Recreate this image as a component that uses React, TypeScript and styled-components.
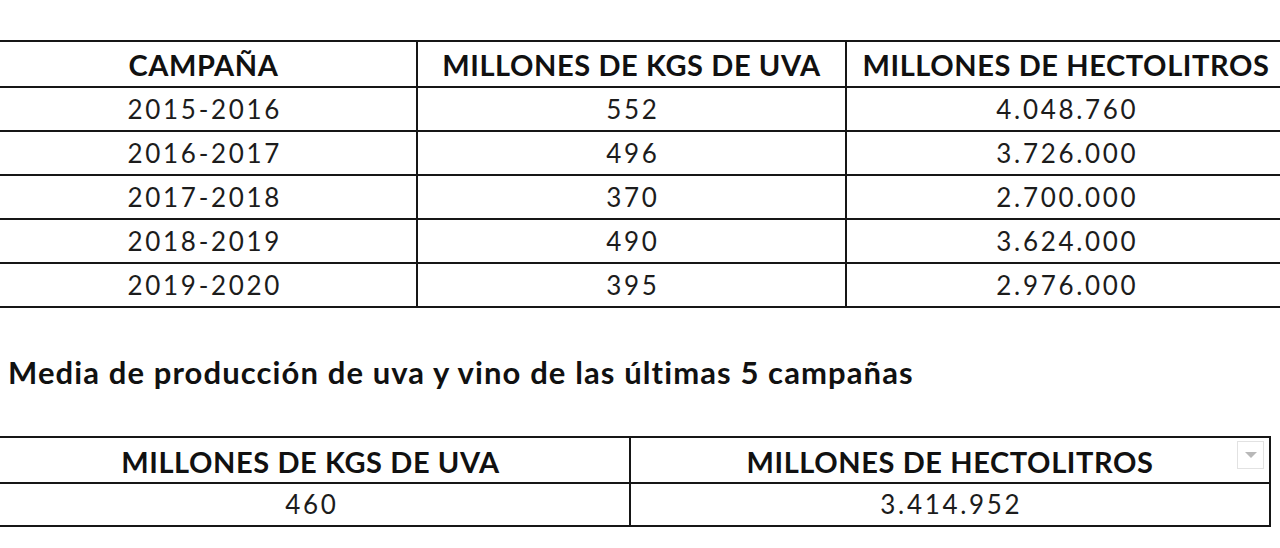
import React from "react";
import styled, { createGlobalStyle } from "styled-components";

const GlobalStyle = createGlobalStyle`
  html, body { margin: 0; padding: 0; background: #ffffff; }
  body { font-family: Lato, "Open Sans", sans-serif; color: #151515; }
`;

const Page = styled.div`
  width: 1280px;
  height: 548px;
  overflow: hidden;
  padding-top: 40px;
  box-sizing: border-box;
  display: flex;
  flex-direction: column;
`;

const Table = styled.table<{ $offset: number; $width: number }>`
  border-collapse: collapse;
  margin-left: ${(p) => p.$offset}px;
  width: ${(p) => p.$width}px;
  table-layout: fixed;
  flex: none;
`;

const HeadCell = styled.th<{ $h?: number }>`
  border: 2px solid #161616;
  height: ${(p) => p.$h ?? 40.5}px;
  padding: 3px 0 0;
  font-weight: 700;
  font-size: 29px;
  line-height: 36px;
  letter-spacing: 0.6px;
  text-align: center;
  vertical-align: middle;
  position: relative;
  color: #111;
`;

const Cell = styled.td<{ $h?: number }>`
  border: 2px solid #161616;
  height: ${(p) => p.$h ?? 42.2}px;
  padding: 0;
  font-size: 26px;
  line-height: 32px;
  letter-spacing: 2.7px;
  text-indent: 2.7px;
  text-align: center;
  vertical-align: middle;
  color: #1c1c1c;
`;

const Title = styled.h2`
  margin: 47px 0 0 8px;
  font-size: 31px;
  letter-spacing: 1.1px;
  font-weight: 700;
  color: #111;
  line-height: 34px;
  flex: none;
`;

const Gap = styled.div`
  height: 47px;
  flex: none;
`;

const FilterButton = styled.span`
  position: absolute;
  right: 5px;
  top: 3px;
  width: 27px;
  height: 28px;
  border: 1px solid #e2e2e2;
  box-sizing: border-box;
  display: flex;
  align-items: center;
  justify-content: center;
`;

const Arrow = styled.span`
  width: 0;
  height: 0;
  border-left: 6px solid transparent;
  border-right: 6px solid transparent;
  border-top: 6px solid #b8b8b8;
`;

const rows = [
  ["2015-2016", "552", "4.048.760"],
  ["2016-2017", "496", "3.726.000"],
  ["2017-2018", "370", "2.700.000"],
  ["2018-2019", "490", "3.624.000"],
  ["2019-2020", "395", "2.976.000"],
];

export default function App() {
  return (
    <>
      <GlobalStyle />
      <Page>
        <Table $offset={-11} $width={1296}>
          <colgroup>
            <col style={{ width: 427 }} />
            <col style={{ width: 429 }} />
            <col style={{ width: 440 }} />
          </colgroup>
          <thead>
            <tr>
              <HeadCell>CAMPAÑA</HeadCell>
              <HeadCell>MILLONES DE KGS DE UVA</HeadCell>
              <HeadCell>MILLONES DE HECTOLITROS</HeadCell>
            </tr>
          </thead>
          <tbody>
            {rows.map((r) => (
              <tr key={r[0]}>
                <Cell>{r[0]}</Cell>
                <Cell>{r[1]}</Cell>
                <Cell>{r[2]}</Cell>
              </tr>
            ))}
          </tbody>
        </Table>
        <Title>Media de producción de uva y vino de las últimas 5 campañas</Title>
        <Gap />
        <Table $offset={-10} $width={1279}>
          <colgroup>
            <col style={{ width: 639 }} />
            <col style={{ width: 640 }} />
          </colgroup>
          <thead>
            <tr>
              <HeadCell>MILLONES DE KGS DE UVA</HeadCell>
              <HeadCell>
                MILLONES DE HECTOLITROS
                <FilterButton>
                  <Arrow />
                </FilterButton>
              </HeadCell>
            </tr>
          </thead>
          <tbody>
            <tr>
              <Cell $h={41}>460</Cell>
              <Cell $h={41}>3.414.952</Cell>
            </tr>
          </tbody>
        </Table>
      </Page>
    </>
  );
}
